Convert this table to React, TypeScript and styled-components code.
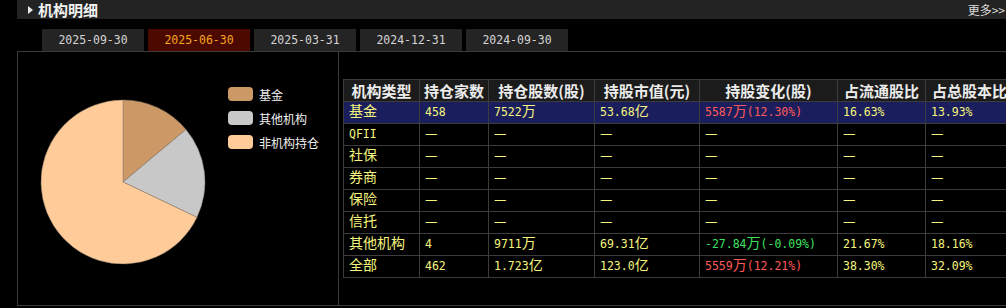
import styled, { createGlobalStyle } from "styled-components";

const GlobalStyle = createGlobalStyle`
  body {
    margin: 0;
    background: #000;
  }
`;

const CJK = /([\u4e00-\u9fff\u2014]+)/;

function rich(text: string) {
  return text.split(CJK).map((part, i) =>
    CJK.test(part) ? <Han key={i}>{part}</Han> : part
  );
}

const tabs = ["2025-09-30", "2025-06-30", "2025-03-31", "2024-12-31", "2024-09-30"];

const headers = ["机构类型", "持仓家数", "持仓股数(股)", "持股市值(元)", "持股变化(股)", "占流通股比", "占总股本比"];
const widths = [76, 69, 106, 105, 138, 88, 88];

type Row = { cells: string[]; change?: "up" | "down"; active?: boolean };

const D = "—";
const rows: Row[] = [
  { cells: ["基金", "458", "7522万", "53.68亿", "5587万(12.30%)", "16.63%", "13.93%"], change: "up", active: true },
  { cells: ["QFII", D, D, D, D, D, D] },
  { cells: ["社保", D, D, D, D, D, D] },
  { cells: ["券商", D, D, D, D, D, D] },
  { cells: ["保险", D, D, D, D, D, D] },
  { cells: ["信托", D, D, D, D, D, D] },
  { cells: ["其他机构", "4", "9711万", "69.31亿", "-27.84万(-0.09%)", "21.67%", "18.16%"], change: "down" },
  { cells: ["全部", "462", "1.723亿", "123.0亿", "5559万(12.21%)", "38.30%", "32.09%"], change: "up" },
];

const slices = [
  { name: "基金", value: 13.93, color: "#cc9966" },
  { name: "其他机构", value: 18.16, color: "#c8c8c8" },
  { name: "非机构持仓", value: 67.91, color: "#ffcc99" },
];

function Pie() {
  const cx = 83;
  const cy = 83;
  const r = 82;
  let start = 0;
  return (
    <svg width="166" height="166" viewBox="0 0 166 166">
      {slices.map((s) => {
        const a0 = (start / 100) * Math.PI * 2;
        start += s.value;
        const a1 = (start / 100) * Math.PI * 2;
        const x0 = cx + r * Math.sin(a0);
        const y0 = cy - r * Math.cos(a0);
        const x1 = cx + r * Math.sin(a1);
        const y1 = cy - r * Math.cos(a1);
        const large = a1 - a0 > Math.PI ? 1 : 0;
        return (
          <path
            key={s.name}
            d={`M${cx} ${cy} L${x0} ${y0} A${r} ${r} 0 ${large} 1 ${x1} ${y1} Z`}
            fill={s.color}
            stroke="#8a7a6a"
            strokeWidth="0.5"
          />
        );
      })}
    </svg>
  );
}

export default function App() {
  return (
    <Page>
      <GlobalStyle />
      <TitleBar>
        <Title>
          <Arrow />
          机构明细
        </Title>
        <More>更多&gt;&gt;</More>
      </TitleBar>
      <Tabs>
        {tabs.map((t) => (
          <Tab key={t} $active={t === "2025-06-30"}>
            {t}
          </Tab>
        ))}
      </Tabs>
      <Panel>
        <PieBox>
          <Pie />
          <Legend>
            {slices.map((s) => (
              <LegendItem key={s.name}>
                <Swatch $color={s.color} />
                {s.name}
              </LegendItem>
            ))}
          </Legend>
        </PieBox>
        <TableArea>
          <Table>
            <colgroup>
              {widths.map((w, i) => (
                <col key={i} style={{ width: w }} />
              ))}
            </colgroup>
            <thead>
              <tr>
                {headers.map((h) => (
                  <Th key={h}>{h}</Th>
                ))}
              </tr>
            </thead>
            <tbody>
              {rows.map((row) => (
                <Tr key={row.cells[0]} $active={row.active}>
                  {row.cells.map((c, i) => (
                    <Td key={i} $tone={i === 4 && row.change ? row.change : undefined}>
                      {rich(c)}
                    </Td>
                  ))}
                </Tr>
              ))}
            </tbody>
          </Table>
        </TableArea>
      </Panel>
    </Page>
  );
}

const Page = styled.div`
  width: 1006px;
  height: 308px;
  overflow: hidden;
  background: #000;
`;

const TitleBar = styled.div`
  margin-left: 17px;
  height: 19px;
  background: #232323;
  display: flex;
  align-items: center;
  justify-content: space-between;
  padding: 0 1px 0 11px;
`;

const Title = styled.div`
  display: flex;
  align-items: center;
  gap: 5px;
  color: #f2f2f2;
  font-family: "Noto Sans CJK SC", sans-serif;
  font-weight: 700;
  font-size: 15px;
  line-height: 19px;
`;

const Arrow = styled.span`
  width: 0;
  height: 0;
  border-top: 4px solid transparent;
  border-bottom: 4px solid transparent;
  border-left: 5px solid #e8e8e8;
`;

const More = styled.span`
  color: #dcdcdc;
  font-family: "Noto Sans CJK SC", sans-serif;
  font-size: 12px;
  line-height: 19px;
`;

const Tabs = styled.div`
  display: flex;
  gap: 4px;
  margin: 10px 0 0 42px;
`;

const Tab = styled.div<{ $active?: boolean }>`
  width: 102px;
  height: 22px;
  display: flex;
  align-items: center;
  justify-content: center;
  background: ${(p) => (p.$active ? "#4c0900" : "#242424")};
  color: ${(p) => (p.$active ? "#f5a623" : "#d4d4d4")};
  font-family: "DejaVu Sans Mono", monospace;
  font-size: 11.5px;
`;

const Panel = styled.div`
  margin-left: 17px;
  width: 1000px;
  height: 255px;
  box-sizing: border-box;
  border: 1px solid #3a3a3a;
  display: flex;
`;

const PieBox = styled.div`
  width: 321px;
  flex-shrink: 0;
  box-sizing: border-box;
  border-right: 1px solid #3a3a3a;
  display: flex;
  align-items: flex-start;
  gap: 22px;
  padding: 35px 0 0 22px;

  svg {
    margin-top: 12px;
    flex-shrink: 0;
  }
`;

const Legend = styled.div`
  display: flex;
  flex-direction: column;
  gap: 10px;
`;

const LegendItem = styled.div`
  display: flex;
  align-items: center;
  gap: 6px;
  height: 14px;
  color: #f0f0f0;
  font-family: "Noto Sans CJK SC", sans-serif;
  font-size: 12px;
  white-space: nowrap;
`;

const Swatch = styled.span<{ $color: string }>`
  width: 25px;
  height: 14px;
  border-radius: 4px;
  background: ${(p) => p.$color};
`;

const TableArea = styled.div`
  padding: 27px 0 0 4px;
`;

const Table = styled.table`
  border-collapse: collapse;
  table-layout: fixed;
  width: 670px;
`;

const Th = styled.th`
  height: 21px;
  padding: 0;
  border: 1px solid #3c3c3c;
  background: #1b1b1b;
  color: #ececec;
  font-family: "Noto Sans CJK SC", sans-serif;
  font-weight: 700;
  font-size: 15px;
  line-height: 20px;
  text-align: center;
  white-space: nowrap;
  overflow: hidden;
`;

const Tr = styled.tr<{ $active?: boolean }>`
  background: ${(p) => (p.$active ? "#1a1e5c" : "#000")};
`;

const toneColor = { up: "#ff5a5a", down: "#3ee060" } as const;

const Td = styled.td<{ $tone?: "up" | "down" }>`
  height: 21px;
  padding: 0 0 0 5px;
  border: 1px solid #3c3c3c;
  color: ${(p) => (p.$tone ? toneColor[p.$tone] : "#f6f67e")};
  font-family: "DejaVu Sans Mono", monospace;
  font-size: 11.5px;
  line-height: 21px;
  white-space: nowrap;
  overflow: hidden;
`;

const Han = styled.span`
  font-family: "Noto Sans CJK SC", sans-serif;
  font-size: 14px;
  line-height: 14px;
`;
